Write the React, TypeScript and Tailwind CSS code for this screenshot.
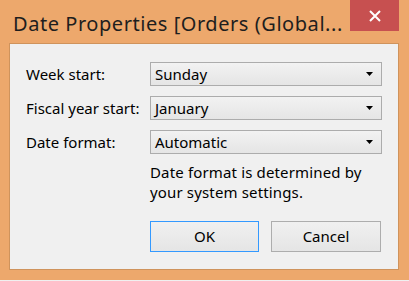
const font = { fontFamily: '"Noto Sans", "Open Sans", sans-serif' }

function Select({ value }: { value: string }) {
  return (
    <div className="flex h-[24px] w-[232px] items-center justify-between border border-[#acacac] bg-gradient-to-b from-[#f2f2f2] to-[#e5e5e5] pl-[4px] pr-[7px]">
      <span className="text-[15px] leading-none text-[#000]">{value}</span>
      <svg width="8" height="4" viewBox="0 0 8 4">
        <path d="M0 0h7L3.5 4z" fill="#000" />
      </svg>
    </div>
  )
}

function Row({ label, value }: { label: string; value: string }) {
  return (
    <div className="flex h-[24px] items-center">
      <span className="w-[124px] text-[15px] leading-none text-[#000]">{label}</span>
      <Select value={value} />
    </div>
  )
}

export default function App() {
  return (
    <div className="flex h-[281px] w-[409px] flex-col bg-[#eda86c]" style={font}>
      {/* title bar */}
      <div className="flex h-[43px] items-start justify-between">
        <span className="mt-[12px] pl-[13px] text-[20px] leading-[24px] tracking-[0.55px] text-[#1e1e1e]">
          Date Properties [Orders (Global...
        </span>
        <div className="mr-[10px] flex h-[31px] w-[49px] items-center justify-center bg-[#c75050]">
          <svg width="12" height="12" viewBox="0 0 12 12">
            <path d="M1 1l10 10M11 1L1 11" stroke="#fff" strokeWidth="2" />
          </svg>
        </div>
      </div>

      {/* content panel */}
      <div className="mx-[9px] flex h-[227px] w-[390px] flex-col border border-[#cf935c] bg-[#f0f0f0] pl-[16px] pt-[18px]">
        <div className="flex flex-col gap-[10px]">
          <Row label="Week start:" value="Sunday" />
          <Row label="Fiscal year start:" value="January" />
          <Row label="Date format:" value="Automatic" />
        </div>
        <p className="ml-[124px] mt-[8px] text-[15px] leading-[20px] tracking-[0.15px] text-[#000]">
          Date format is determined by
          <br />
          your system settings.
        </p>
        <div className="ml-[124px] mt-[19px] flex gap-[12px]">
          <button className="h-[31px] w-[109px] border border-[#3399ff] bg-gradient-to-b from-[#f0f0f0] to-[#e5e5e5] text-[15px] text-[#000]">
            OK
          </button>
          <button className="h-[31px] w-[110px] border border-[#adadad] bg-gradient-to-b from-[#f0f0f0] to-[#e5e5e5] text-[15px] text-[#000]">
            Cancel
          </button>
        </div>
      </div>
      <div className="mt-[10px] h-[1px] w-full bg-[#f0f0f0]" />
    </div>
  )
}
